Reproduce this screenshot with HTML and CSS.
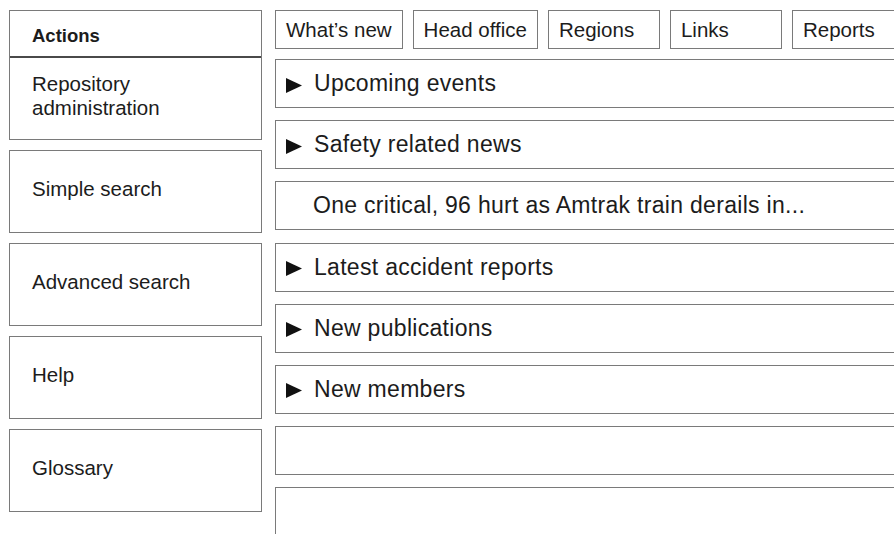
FILE: index.html
```html
<!DOCTYPE html>
<html lang="en">
<head>
<meta charset="utf-8">
<title>Safety portal</title>
<link rel="stylesheet" href="styles.css">
</head>
<body>
<div class="page">
  <aside class="sidebar">
    <div class="box actions">
      <div class="actions-head">Actions</div>
      <a class="item item-first" href="#">Repository<br>administration</a>
    </div>
    <a class="box item" href="#">Simple search</a>
    <a class="box item" href="#">Advanced search</a>
    <a class="box item" href="#">Help</a>
    <a class="box item" href="#">Glossary</a>
  </aside>

  <main class="main">
    <nav class="tabs">
      <a class="tab" href="#">What’s new</a>
      <a class="tab" href="#">Head office</a>
      <a class="tab" href="#">Regions</a>
      <a class="tab" href="#">Links</a>
      <a class="tab" href="#">Reports</a>
    </nav>

    <section class="panel">
      <svg class="arrow" viewBox="0 0 16 15" width="16" height="15"><polygon points="0,0 16,7.5 0,15"/></svg>
      <span>Upcoming events</span>
    </section>
    <section class="panel">
      <svg class="arrow" viewBox="0 0 16 15" width="16" height="15"><polygon points="0,0 16,7.5 0,15"/></svg>
      <span>Safety related news</span>
    </section>
    <section class="panel panel-headline">
      <span>One critical, 96 hurt as Amtrak train derails in...</span>
    </section>
    <section class="panel">
      <svg class="arrow" viewBox="0 0 16 15" width="16" height="15"><polygon points="0,0 16,7.5 0,15"/></svg>
      <span>Latest accident reports</span>
    </section>
    <section class="panel">
      <svg class="arrow" viewBox="0 0 16 15" width="16" height="15"><polygon points="0,0 16,7.5 0,15"/></svg>
      <span>New publications</span>
    </section>
    <section class="panel">
      <svg class="arrow" viewBox="0 0 16 15" width="16" height="15"><polygon points="0,0 16,7.5 0,15"/></svg>
      <span>New members</span>
    </section>
    <section class="panel"></section>
    <section class="panel panel-tall"></section>
  </main>
</div>
</body>
</html>
```

FILE: styles.css
```css
html, body {
  margin: 0;
  padding: 0;
  background: #fff;
  overflow: hidden;
}

body {
  font-family: "Liberation Sans", Arial, sans-serif;
  color: #1c1c1c;
}

a {
  color: inherit;
  text-decoration: none;
}

.page {
  display: flex;
  align-items: flex-start;
  gap: 13px;
  padding: 10px 0 0 9px;
}

/* ---- left action column ---- */
.sidebar {
  width: 253px;
  flex: none;
  display: flex;
  flex-direction: column;
  gap: 10px;
}

.box {
  border: 1px solid #7a7a7a;
  box-sizing: border-box;
  background: #fff;
}

.actions {
  display: flex;
  flex-direction: column;
}

.actions-head {
  height: 47px;
  box-sizing: border-box;
  border-bottom: 2px solid #4a4a4a;
  display: flex;
  align-items: center;
  padding: 4px 0 0 22px;
  font-weight: bold;
  font-size: 18.5px;
}

.item {
  display: flex;
  align-items: center;
  box-sizing: border-box;
  height: 83px;
  padding: 0 0 5px 22px;
  font-size: 20.5px;
  line-height: 24px;
}

.item-first {
  height: 81px;
}

/* ---- main content ---- */
.main {
  width: 700px;
  flex: none;
  display: flex;
  flex-direction: column;
  gap: 12.2px;
}

.tabs {
  display: flex;
  gap: 10px;
  margin-bottom: -2.2px;
}

.tab {
  height: 39px;
  min-width: 112px;
  box-sizing: border-box;
  padding: 0 10px;
  border: 1px solid #7a7a7a;
  display: flex;
  align-items: center;
  font-size: 20.5px;
  white-space: nowrap;
}

.panel {
  height: 49px;
  box-sizing: border-box;
  border: 1px solid #7a7a7a;
  display: flex;
  align-items: center;
  gap: 12px;
  padding: 0 0 0 10px;
  font-size: 23px;
  letter-spacing: 0.3px;
  white-space: nowrap;
}

.panel-headline {
  padding-left: 37px;
}

.panel-tall {
  height: 80px;
}

.arrow {
  flex: none;
  fill: #111;
  margin-top: 3px;
}
```
